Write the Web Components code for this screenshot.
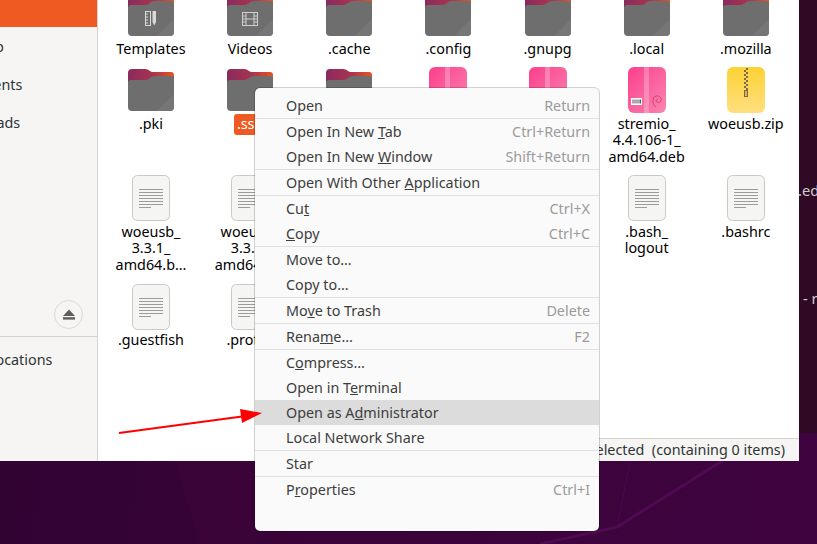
<!DOCTYPE html>
<html>
<head>
<meta charset="utf-8">
<title>Files</title>
<style>
  html, body { margin: 0; height: 100%; overflow: hidden; }
  body { font-family: "Noto Sans", "Open Sans", sans-serif; font-size: 14.35px; }
</style>
</head>
<body>
<desk-top>
  <term-strip></term-strip>
  <app-window>
    <side-bar slot="side">
      <side-row selected>Home</side-row>
      <side-row style="padding-left: 3px">Desktop</side-row>
      <side-row>Documents</side-row>
      <side-row>Downloads</side-row>
      <side-row>Music</side-row>
      <side-row>Pictures</side-row>
      <side-row>Videos</side-row>
      <side-row>Trash</side-row>
      <side-row eject>Floppy</side-row>
      <side-row divided>Other Locations</side-row>
    </side-bar>
    <file-grid>
      <file-item icon="templates">Templates</file-item>
      <file-item icon="videos">Videos</file-item>
      <file-item icon="folder">.cache</file-item>
      <file-item icon="folder">.config</file-item>
      <file-item icon="folder">.gnupg</file-item>
      <file-item icon="folder">.local</file-item>
      <file-item icon="folder">.mozilla</file-item>

      <file-item icon="folder">.pki</file-item>
      <file-item icon="folder" selected>.ssh</file-item>
      <file-item icon="folder"></file-item>
      <file-item icon="deb"></file-item>
      <file-item icon="deb"></file-item>
      <file-item icon="deb">stremio_<br>4.4.106-1_<br>amd64.deb</file-item>
      <file-item icon="zip">woeusb.zip</file-item>

      <file-item icon="doc">woeusb_<br>3.3.1_<br>amd64.b…</file-item>
      <file-item icon="doc">woeusb_<br>3.3.1_<br>amd64.b…</file-item>
      <file-item></file-item>
      <file-item></file-item>
      <file-item></file-item>
      <file-item icon="doc">.bash_<br>logout</file-item>
      <file-item icon="doc">.bashrc</file-item>

      <file-item icon="doc">.guestfish</file-item>
      <file-item icon="doc">.profile</file-item>
    </file-grid>
    <status-bar slot="status">“.ssh” selected  (containing 0 items)</status-bar>
  </app-window>
  <context-menu>
    <menu-item accel="Return">Open</menu-item>
    <menu-sep></menu-sep>
    <menu-item accel="Ctrl+Return">Open In New <u>T</u>ab</menu-item>
    <menu-item accel="Shift+Return">Open In New <u>W</u>indow</menu-item>
    <menu-sep></menu-sep>
    <menu-item>Open With Other <u>A</u>pplication</menu-item>
    <menu-sep></menu-sep>
    <menu-item accel="Ctrl+X">Cu<u>t</u></menu-item>
    <menu-item accel="Ctrl+C"><u>C</u>opy</menu-item>
    <menu-sep></menu-sep>
    <menu-item>Move to…</menu-item>
    <menu-item>Copy to…</menu-item>
    <menu-sep></menu-sep>
    <menu-item accel="Delete">Mo<u>v</u>e to Trash</menu-item>
    <menu-sep></menu-sep>
    <menu-item accel="F2">Rena<u>m</u>e…</menu-item>
    <menu-sep></menu-sep>
    <menu-item>C<u>o</u>mpress…</menu-item>
    <menu-item>Open in T<u>e</u>rminal</menu-item>
    <menu-item active>Open as A<u>d</u>ministrator</menu-item>
    <menu-item>Local Network Share</menu-item>
    <menu-sep></menu-sep>
    <menu-item>Star</menu-item>
    <menu-sep></menu-sep>
    <menu-item accel="Ctrl+I">P<u>r</u>operties</menu-item>
  </context-menu>
  <red-arrow></red-arrow>
</desk-top>

<script>
class DeskTop extends HTMLElement {
  constructor() {
    super();
    this._root = this.attachShadow({mode: 'open'});
    this._root.innerHTML = `
    <style>
      :host {
        display: block;
        position: relative;
        width: 817px;
        height: 544px;
        overflow: hidden;
        background: linear-gradient(100deg, #2e0331 0%, #3a0339 45%, #3f0440 100%);
      }
      svg { position: absolute; left: 0; top: 0; }
    </style>
    <svg width="817" height="544" viewBox="0 0 817 544">
      <polygon points="175,461 255,461 255,544 200,544" fill="#3b0439"/>
      <polyline points="540,544 617,527 722,461" fill="none" stroke="#4f0a52" stroke-width="3"/>
      <line x1="617" y1="527" x2="630" y2="461" stroke="#4a0850" stroke-width="1"/>
    </svg>
    <slot></slot>`;
  }
}

class TermStrip extends HTMLElement {
  constructor() {
    super();
    this._root = this.attachShadow({mode: 'open'});
    this._root.innerHTML = `
    <style>
      :host {
        position: absolute;
        left: 790px;
        top: 0;
        width: 60px;
        height: 433px;
        background: #300a24;
        color: #cfcfcf;
        font: 14.67px "Noto Sans", sans-serif;
        line-height: 20px;
        display: flex;
        flex-direction: column;
        padding-left: 8px;
        box-sizing: border-box;
      }
      .a { margin-top: 180px; }
      .b { margin-top: 88px; padding-left: 5px; }
    </style>
    <div class="a">.ed</div>
    <div class="b">- r</div>`;
  }
}

class AppWindow extends HTMLElement {
  constructor() {
    super();
    this._root = this.attachShadow({mode: 'open'});
    this._root.innerHTML = `
    <style>
      :host {
        position: absolute;
        left: 0;
        top: 0;
        z-index: 0;
        width: 799px;
        height: 461px;
        display: flex;
        overflow: hidden;
        background: #fff;
        color: #000;
      }
      .main { flex: 1; min-width: 0; position: relative; overflow: hidden; }
    </style>
    <slot name="side"></slot>
    <div class="main">
      <slot></slot>
      <slot name="status"></slot>
    </div>`;
  }
}

class SideBar extends HTMLElement {
  constructor() {
    super();
    this._root = this.attachShadow({mode: 'open'});
    this._root.innerHTML = `
    <style>
      :host {
        display: flex;
        flex-direction: column;
        flex: none;
        box-sizing: border-box;
        width: 98px;
        height: 461px;
        background: #f6f5f4;
        border-right: 1px solid #d6d2ce;
        overflow: hidden;
      }
      .list { margin-top: -11px; margin-left: -55px; width: 152px; display: flex; flex-direction: column; }
    </style>
    <div class="list"><slot></slot></div>`;
  }
}

class SideRow extends HTMLElement {
  constructor() {
    super();
    this._root = this.attachShadow({mode: 'open'});
    this._root.innerHTML = `
    <style>
      :host {
        display: flex;
        align-items: center;
        justify-content: space-between;
        height: 38px;
        flex: none;
        color: #2e3436;
        white-space: nowrap;
        box-sizing: border-box;
      }
      :host([selected]) { background: #ee5a22; color: #fff; }
      :host([eject]) { margin-top: 2px; }
      :host([divided]) { margin-top: 3px; height: 43px; padding-top: 3px; box-shadow: inset 0 1px 0 #d6d2ce; }
      .btn {
        display: none;
        width: 27px;
        height: 27px;
        border: 1px solid #dcd9d6;
        border-radius: 50%;
        margin-right: 14px;
        align-items: center;
        justify-content: center;
      }
      :host([eject]) .btn { display: flex; }
      :host([eject]) .txt { visibility: hidden; }
    </style>
    <span class="txt"><slot></slot></span>
    <span class="btn">
      <svg width="14" height="14" viewBox="0 0 14 14"><path d="M7 2.5 L13 9 H1 Z" fill="#5e5e5e"/><rect x="1" y="10.2" width="12" height="2.4" fill="#5e5e5e"/></svg>
    </span>`;
  }
}

class FileGrid extends HTMLElement {
  constructor() {
    super();
    this._root = this.attachShadow({mode: 'open'});
    this._root.innerHTML = `
    <style>
      :host {
        display: grid;
        grid-template-columns: repeat(7, 99.15px);
        align-content: start;
        padding-left: 3.4px;
        margin-top: -9px;
      }
    </style>
    <slot></slot>`;
  }
}

const ICONS = {
  back: `<defs><linearGradient id="g" x1="0" x2="1" y1="0" y2="0">
      <stop offset="0" stop-color="#8a2a5e"/><stop offset=".55" stop-color="#a8344f"/><stop offset="1" stop-color="#e95420"/>
    </linearGradient></defs>
    <path d="M1 7Q1 3 5 3H18Q21 3 23 5Q24 6 26 6H44Q47 6 47 9V22H1Z" fill="url(#g)"/>
    <path d="M1 17Q1 14 4 14H18Q21 14 23 12Q25 10 28 10H44Q47 10 47 13V41Q47 45 43 45H5Q1 45 1 41Z" fill="#6e6e6e"/>
    <path d="M47 28V41Q47 45 43 45H30Z" fill="#767676"/>`,
  doc: `<rect x="5.5" y="1.5" width="37" height="45" rx="5" fill="#f5f5f4" stroke="#c9c9c7"/>
    <path d="M12 15.5H36M12 18.5H36M12 21.5H36M12 24.5H36M12 27.5H36M12 30.5H36M12 33.5H24" stroke="#9c9c9c" stroke-width="1" fill="none"/>`,
  deb: `<defs><linearGradient id="p" x1="0" x2="1" y1="0" y2="1">
      <stop offset="0" stop-color="#fb3f8c"/><stop offset="1" stop-color="#f985b0"/>
    </linearGradient></defs>
    <rect x="5" y="1" width="38" height="46" rx="6" fill="url(#p)"/>
    <rect x="21" y="1" width="5" height="46" fill="#fff" opacity=".25"/>
    <rect x="8" y="32" width="11" height="7" fill="#fff"/>
    <path d="M10 33.5V37.5M12 33.5V37.5M14 33.5V37.5M16 33.5V37.5M17.5 33.5V37.5" stroke="#555" stroke-width="1"/>
    <path d="M33 41C29 39 29 31 33 30C37 29 39 33 38 35C37 37 34 37 33 35C33 34 34 33 35 33.5" fill="none" stroke="#d93f7a" stroke-width="1"/>`,
  zip: `<defs><linearGradient id="y" x1="0" x2="0" y1="0" y2="1">
      <stop offset="0" stop-color="#fdd235"/><stop offset="1" stop-color="#ffdf80"/>
    </linearGradient></defs>
    <rect x="5" y="1" width="38" height="46" rx="6" fill="url(#y)"/>
    <path d="M24 2H26V4H24ZM22 4H24V6H22ZM24 6H26V8H24ZM22 8H24V10H22ZM24 10H26V12H24ZM22 12H24V14H22ZM24 14H26V16H24ZM22 16H24V18H22ZM24 18H26V20H24ZM22 20H24V22H22ZM24 22H26V24H24Z" fill="#7d6a4d"/>
    <rect x="22.5" y="24.5" width="3" height="6" fill="#d9b04a" stroke="#7d6a4d"/>`
};
ICONS.folder = ICONS.back;
ICONS.templates = ICONS.back + `
    <rect x="18.5" y="20.5" width="5" height="14" fill="none" stroke="#d8d8d8"/>
    <path d="M19 23H21M19 26H21M19 29H21M19 32H21" stroke="#d8d8d8"/>
    <path d="M25.5 20H29V31L27.2 34.5L25.5 31Z" fill="#d8d8d8"/>`;
ICONS.videos = ICONS.back + `
    <rect x="16.5" y="21.5" width="15" height="13" fill="none" stroke="#cfcfcf"/>
    <path d="M20 21.5V34.5M28 21.5V34.5M20 28H28M16.5 25H20M16.5 28H20M16.5 31H20M28 25H31.5M28 28H31.5M28 31H31.5" stroke="#cfcfcf" fill="none"/>`;

class FileItem extends HTMLElement {
  constructor() {
    super();
    this._root = this.attachShadow({mode: 'open'});
  }

  connectedCallback() {
    const icon = this.getAttribute('icon');
    this._root.innerHTML = `
    <style>
      :host {
        display: flex;
        flex-direction: column;
        align-items: center;
        padding-bottom: 9.2px;
        text-align: center;
        line-height: 16.5px;
        color: #000;
      }
      svg { display: block; width: 48px; height: 48px; flex: none; }
      .label { margin-top: 1.5px; white-space: nowrap; }
      :host([selected]) .label {
        background: #ee5a22;
        color: #fff;
        border-radius: 3px;
        padding: 2px 3px 2px 3px;
        margin-top: 0;
      }
    </style>
    ${icon ? `<svg viewBox="0 0 48 48">${ICONS[icon]}</svg>` : `<svg viewBox="0 0 48 48"></svg>`}
    <div class="label"><slot></slot></div>`;
  }
}

class StatusBar extends HTMLElement {
  constructor() {
    super();
    this._root = this.attachShadow({mode: 'open'});
    this._root.innerHTML = `
    <style>
      :host {
        position: absolute;
        right: 0;
        top: 438px;
        z-index: 1;
        display: block;
        height: 23px;
        box-sizing: border-box;
        border-top: 1px solid #d6d2ce;
        background: #f6f5f4;
        color: #2e3436;
        padding: 0 14px 0 10px;
        font-size: 14.35px;
        line-height: 22px;
      }
      .txt { white-space: pre; }
    </style>
    <div class="txt"><slot></slot></div>`;
  }
}

class ContextMenu extends HTMLElement {
  constructor() {
    super();
    this._root = this.attachShadow({mode: 'open'});
    this._root.innerHTML = `
    <style>
      :host {
        position: absolute;
        left: 254px;
        top: 87px;
        z-index: 1;
        width: 346px;
        height: 445px;
        box-sizing: border-box;
        padding-top: 5px;
        background: #fafafa;
        border: 1px solid rgba(0,0,0,.18);
        border-radius: 6px;
        background-clip: padding-box;
        display: flex;
        flex-direction: column;
      }
    </style>
    <slot></slot>`;
  }
}

class MenuItem extends HTMLElement {
  constructor() {
    super();
    this._root = this.attachShadow({mode: 'open'});
    this._root.innerHTML = `
    <style>
      :host {
        display: flex;
        align-items: center;
        justify-content: space-between;
        box-sizing: border-box;
        height: 25px;
        flex: none;
        padding: 0 9px 0 31px;
        color: #3d3d3d;
        white-space: nowrap;
      }
      :host([active]) { background: #dcdcdc; }
      .accel { color: #9b9b9b; }
    </style>
    <span><slot></slot></span>
    <span class="accel"></span>`;
  }

  connectedCallback() {
    this._root.querySelector('.accel').textContent = this.getAttribute('accel') || '';
  }
}

class MenuSep extends HTMLElement {
  constructor() {
    super();
    this._root = this.attachShadow({mode: 'open'});
    this._root.innerHTML = `<style>:host { display: block; height: 1px; flex: none; background: #e0e0e0; }</style>`;
  }
}

class RedArrow extends HTMLElement {
  constructor() {
    super();
    this._root = this.attachShadow({mode: 'open'});
    this._root.innerHTML = `
    <style>
      :host { position: absolute; left: 110px; top: 400px; z-index: 2; width: 160px; height: 40px; }
      svg { display: block; }
    </style>
    <svg width="160" height="40" viewBox="0 0 160 40">
      <line x1="9" y1="33" x2="132" y2="16.5" stroke="#ff0000" stroke-width="2"/>
      <polygon points="130,9 152,13 132,23" fill="#ff0000"/>
    </svg>`;
  }
}

window.customElements.define('desk-top', DeskTop);
window.customElements.define('term-strip', TermStrip);
window.customElements.define('app-window', AppWindow);
window.customElements.define('side-bar', SideBar);
window.customElements.define('side-row', SideRow);
window.customElements.define('file-grid', FileGrid);
window.customElements.define('file-item', FileItem);
window.customElements.define('status-bar', StatusBar);
window.customElements.define('context-menu', ContextMenu);
window.customElements.define('menu-item', MenuItem);
window.customElements.define('menu-sep', MenuSep);
window.customElements.define('red-arrow', RedArrow);
</script>
</body>
</html>
